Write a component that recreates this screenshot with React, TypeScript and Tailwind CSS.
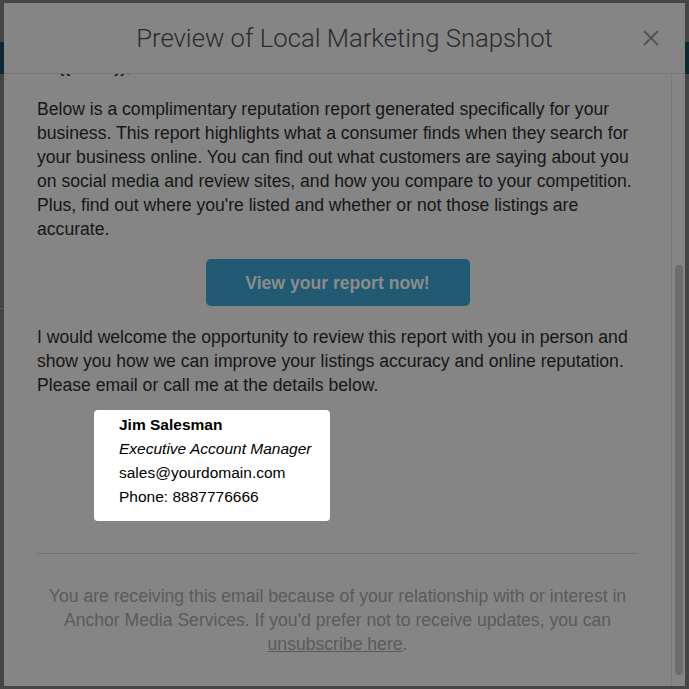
import React from 'react';

const CloseIcon: React.FC = () => (
  <svg width="18" height="18" viewBox="0 0 18 18" fill="none">
    <path d="M2 2 L16 16 M16 2 L2 16" stroke="#535353" strokeWidth="2" />
  </svg>
);

const App: React.FC = () => {
  return (
    <div className="relative w-[689px] h-[689px] overflow-hidden bg-[#454545] pt-[3px] pl-[4px] font-['Liberation_Sans',Arial,sans-serif]">
      {/* page behind the overlay */}
      <div className="absolute left-0 right-0 top-[42px] h-[32px] bg-[#0d2733]" />
      <div className="absolute left-0 top-[308px] w-[4px] h-[1px] bg-[#5a5a5a]" />

      <div className="relative flex flex-col w-[681px] h-[683px] bg-[#858585]">
        {/* header */}
        <div className="relative flex items-center justify-center h-[71px] border-b border-[#777777] shrink-0">
          <h2 className="font-['Roboto',sans-serif] font-light text-[25.7px] text-[#2b2b2b]">
            Preview of Local Marketing Snapshot
          </h2>
          <button className="absolute right-[25px] top-[26px]">
            <CloseIcon />
          </button>
        </div>

        {/* body */}
        <div className="flex flex-1 min-h-0">
          <div className="flex-1 overflow-hidden px-[33px] text-[17.6px] leading-[24px] text-[#161616]">
            <p className="-mt-[20px] whitespace-nowrap">Hi {'{{name}}'},</p>
            <p className="mt-[19px]">
              Below is a complimentary reputation report generated specifically for your business. This report
              highlights what a consumer finds when they search for your business online. You can find out what
              customers are saying about you on social media and review sites, and how you compare to your
              competition. Plus, find out where you're listed and whether or not those listings are accurate.
            </p>
            <div className="flex justify-center mt-[18px]">
              <div className="flex items-center justify-center w-[264px] h-[47px] rounded-[5px] bg-[#215a72] font-bold text-[17.6px] text-[#8c8c8c]">
                View your report now!
              </div>
            </div>
            <p className="mt-[19px]">
              I would welcome the opportunity to review this report with you in person and show you how we can
              improve your listings accuracy and online reputation. Please email or call me at the details below.
            </p>
            <div className="ml-[57px] mt-[13px] w-[236px] rounded-[4px] bg-white pl-[25px] pt-[3px] pb-[12px] text-[15.5px] leading-[24px] text-black">
              <p className="font-bold">Jim Salesman</p>
              <p className="italic">Executive Account Manager</p>
              <p>sales@yourdomain.com</p>
              <p>Phone: 8887776666</p>
            </div>
            <div className="mt-[32px] h-px bg-[#747474]" />
            <p className="mt-[30px] text-center text-[17.6px] leading-[24px] text-[#5a5a5a]">
              You are receiving this email because of your relationship with or interest in Anchor Media
              Services. If you'd prefer not to receive updates, you can <span className="underline">unsubscribe here</span>.
            </p>
          </div>

          {/* scrollbar */}
          <div className="w-[14px] shrink-0 border-l border-[#7a7a7a] pl-[3px] pt-[191px]">
            <div className="w-[8px] h-[410px] rounded-full bg-[#6c6c6c]" />
          </div>
        </div>
      </div>
    </div>
  );
};

export default App;
